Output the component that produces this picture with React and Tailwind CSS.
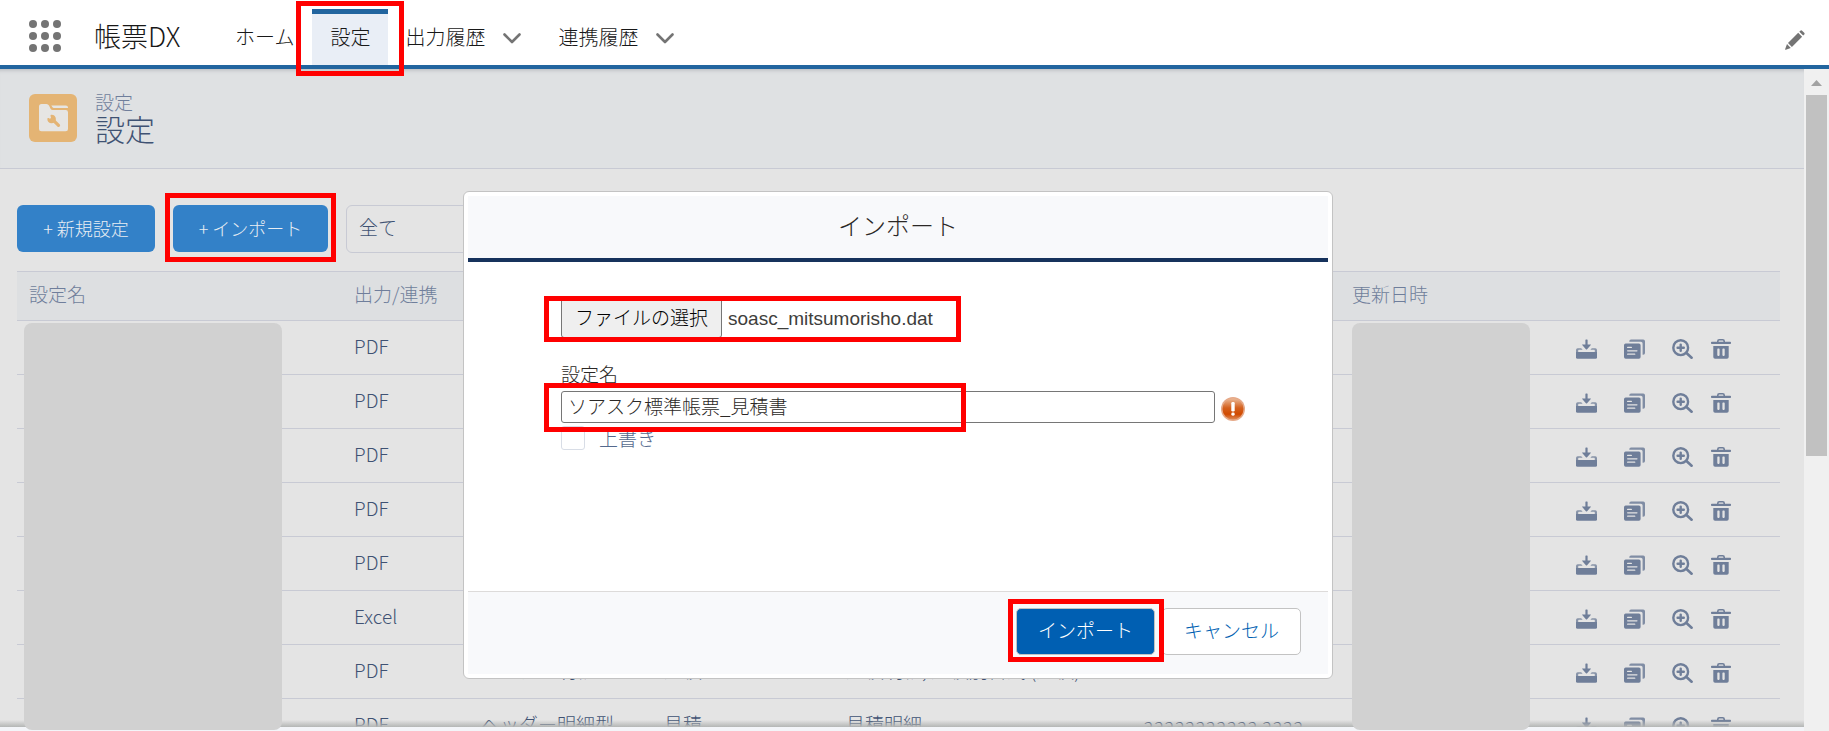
import React from "react";

const rows = [
  ["PDF", "ヘッダー明細型", "見積", "見積明細", ""],
  ["PDF", "ヘッダー明細型", "見積", "見積明細", ""],
  ["PDF", "ヘッダー明細型", "見積", "見積明細", ""],
  ["PDF", "ヘッダー明細型", "見積", "見積明細", ""],
  ["PDF", "ヘッダー明細型", "見積", "見積明細", ""],
  ["Excel", "ヘッダー明細型", "見積", "見積明細", ""],
  ["PDF", "ヘッダー明細型", "見積", "見積明細, 見積別書式 (見積)", ""],
  ["PDF", "ヘッダー明細型", "見積", "見積明細", "aaaaaaaaaaa aaaa"],
];

function Highlight({ className }) {
  return (
    <span
      aria-hidden="true"
      className={`pointer-events-none absolute z-30 border-[5px] border-[#ff0000] ${className}`}
    />
  );
}

function Chevron() {
  return (
    <svg viewBox="0 0 18 11" className="mt-1 h-[11px] w-[18px]" fill="none" stroke="#747474" strokeWidth="2.6" strokeLinecap="round" strokeLinejoin="round">
      <path d="M1.5 1.5 9 9l7.5-7.5" />
    </svg>
  );
}

function DownloadIcon() {
  return (
    <svg viewBox="0 0 21 20" className="h-5 w-[21px]" fill="currentColor">
      <path d="M9.400 1q0-.6.6-.6h1q.6 0 .6.600v4.400h2.900q.9 0 .3.700l-3.700 4.100q-.6.600-1.200 0L6.200 6.100q-.6-.7.3-.7h2.900Z" />
      <path d="M1.800 9.300h3.400l1.400 1.500H2.800q-.6 0-.6.600v2H0V11q0-1.700 1.800-1.700Z" opacity=".8" />
      <path d="M19.200 9.300h-3.400l-1.400 1.500h3.800q.6 0 .6.600v2H21V11q0-1.700-1.800-1.700Z" opacity=".8" />
      <path d="M0 12.900h21v5.300q0 1.500-1.500 1.500h-18Q0 19.700 0 18.200Z" />
    </svg>
  );
}

function CopyIcon() {
  return (
    <svg viewBox="0 0 21 20" className="h-5 w-[21px]" fill="currentColor">
      <path d="M5.300 2.200Q5.300.4 7 .4h12.200Q21 .4 21 2.200V14q0 1.800-1.800 1.800h-.6V4.400q0-1.700-1.700-1.700H5.300Z" opacity=".85" />
      <path fillRule="evenodd" d="M1.700 4.600h13.200q1.700 0 1.700 1.700V18q0 1.700-1.700 1.700H1.700Q0 19.700 0 18V6.300q0-1.700 1.700-1.700Zm2 3.200q-.7 0-.7.600t.7.600h3.600q.7 0 .7-.6t-.7-.6Zm0 3.400q-.7 0-.7.600t.7.600h9.200q.7 0 .7-.6t-.7-.6Zm0 3.400q-.7 0-.7.600t.7.600h7q.7 0 .7-.6t-.7-.6Z" />
    </svg>
  );
}

function ZoomIcon() {
  return (
    <svg viewBox="0 0 21 20" className="h-5 w-[21px]" fill="none" stroke="currentColor" strokeLinecap="round">
      <circle cx="8.700" cy="8.700" r="7.400" strokeWidth="2.400" />
      <path d="M8.700 5.600v6.200M5.600 8.700h6.200" strokeWidth="2.400" />
      <path d="m14.200 13.800 5.400 4.900" strokeWidth="2.600" />
    </svg>
  );
}

function TrashIcon() {
  return (
    <svg viewBox="0 0 20 20" className="size-5" fill="currentColor">
      <path d="M6.800 3V2.300Q6.800.8 8.300.8h3.400q1.500 0 1.500 1.500V3" fill="none" stroke="currentColor" strokeWidth="1.600" />
      <rect x="0" y="2.800" width="20" height="2.200" rx=".8" />
      <path fillRule="evenodd" d="M2.300 7h15.400v11q0 1.800-1.800 1.800H4.100Q2.300 19.800 2.300 18ZM7 9.600q-.7 0-.7.700v5.800q0 .8.7.8h.9q.7 0 .7-.8v-5.800q0-.7-.7-.7Zm5.100 0q-.7 0-.7.700v5.800q0 .8.7.8h.9q.7 0 .7-.8v-5.800q0-.7-.7-.7Z" />
    </svg>
  );
}

function PencilIcon() {
  return (
    <svg viewBox="0 0 20 20" className="size-5" fill="#747474">
      <path d="m14.300 1.700 1-1q.9-.8 1.800 0l2.100 2.100q.9.900 0 1.800l-1 1ZM13.200 2.800l3.900 3.900L6.900 16.900 3 13ZM2 14l3.800 3.900-5 1.800q-.8.200-.6-.6Z" />
    </svg>
  );
}

function FolderWrenchIcon() {
  return (
    <span className="flex size-12 items-center justify-center rounded-md bg-[#e4b474]">
      <svg viewBox="0 0 29 28" className="h-7 w-[29px]">
        <path d="M0 2.500Q0 0 2.500 0h5q1.600 0 2.500 1.500l1.700 3.400Q12.300 6 13.700 6h13Q29 6 29 8.300v16.600q0 2.400-2.400 2.400H2.400Q0 27.300 0 24.900Z" fill="#e6e5e3" />
        <path d="M12.300 1.400h14.500Q29 1.400 29 3.500v.4H15Q13.800 3.900 13.300 3Z" fill="#e6e5e3" />
        <path d="M12.400 11.600a3.400 3.400 0 1 1-3.200 3.200l2 1.200 1.800-1.800Z" fill="#e4b474" stroke="#e4b474" strokeWidth="1.800" strokeLinejoin="round" />
        <path d="m14.200 16.200 5.300 5.200" fill="none" stroke="#e4b474" strokeWidth="3.200" strokeLinecap="round" />
      </svg>
    </span>
  );
}

function RequiredIcon() {
  return (
    <svg viewBox="0 0 24 24" className="mt-[3px] size-6" role="img" aria-label="必須">
      <defs>
        <linearGradient id="warn" x1="0" y1="0" x2="0" y2="1">
          <stop offset="0" stopColor="#eab896" />
          <stop offset=".45" stopColor="#d4601d" />
          <stop offset=".75" stopColor="#d14a00" />
          <stop offset="1" stopColor="#dd8a58" />
        </linearGradient>
      </defs>
      <circle cx="12" cy="12" r="12" fill="#e6a988" />
      <circle cx="12" cy="12" r="10.500" fill="url(#warn)" />
      <rect x="10.300" y="5" width="3.400" height="9.500" rx="1.200" fill="#fff" />
      <rect x="10.300" y="15.500" width="3.400" height="3.200" rx="1.400" fill="#fff" />
    </svg>
  );
}

function GlobalHeader() {
  return (
    <header className="flex h-[69px] shrink-0 items-stretch border-b-4 border-[#22659f] bg-white text-xl leading-6 text-[#181818]">
      <button type="button" aria-label="アプリケーションランチャー" className="ml-[29px] grid grid-cols-3 gap-1 self-center pt-[7px]">
        {Array.from({ length: 9 }, (_, i) => (
          <span key={i} className="size-2 rounded-full bg-[#747474]" />
        ))}
      </button>
      <h1 className="ml-[33px] w-[123px] self-center pt-[6px] text-[27px] leading-8 font-light">帳票DX</h1>
      <nav className="flex items-stretch">
        <a href="#home" className="flex items-center px-[18px] pt-2">ホーム</a>
        <div className="relative flex items-stretch">
          <a href="#settings" className="mt-[9px] flex items-center border-t-[5px] border-[#22659f] bg-[#e9eef6] px-[18px] pb-[6px]">設定</a>
          <Highlight className="top-px -right-4 -left-4 h-[75px]" />
        </div>
        <a href="#output" className="flex items-center gap-[18px] pt-2 pr-5 pl-[17px]">出力履歴<Chevron /></a>
        <a href="#link" className="flex items-center gap-[18px] pt-2 pr-5 pl-[17px]">連携履歴<Chevron /></a>
      </nav>
      <button type="button" aria-label="編集" className="mr-6 ml-auto pt-[15px]">
        <PencilIcon />
      </button>
    </header>
  );
}

function SettingsTable() {
  return (
    <div className="relative mt-[18px]">
      <table className="w-full table-fixed border-collapse text-left text-[19px] leading-6 text-[#3f5273]">
        <colgroup>
          <col className="w-[325px]" />
          <col className="w-[127px]" />
          <col className="w-[183px]" />
          <col className="w-[182px]" />
          <col className="w-[297px]" />
          <col className="w-[209px]" />
          <col className="w-[224px]" />
          <col />
        </colgroup>
        <thead>
          <tr className="h-[49px] border-y border-[#c8cad4] bg-[#dddfe1] text-[#6f7e9b]">
            <th className="px-3 pb-1 font-light">設定名</th>
            <th className="px-3 pb-1 font-light whitespace-nowrap">出力/連携</th>
            <th className="px-3 pb-1 font-light">種別</th>
            <th className="px-3 pb-1 font-light">対象</th>
            <th className="px-3 pb-1 font-light">明細</th>
            <th className="px-3 pb-1 font-light">更新者</th>
            <th className="px-3 pb-1 font-light">更新日時</th>
            <td />
          </tr>
        </thead>
        <tbody>
          {rows.map((row, i) => (
            <tr key={i} className="h-[54px] border-b border-[#c8cad4]">
              <td />
              {row.map((cell, j) => (
                <td key={j} className="px-3 pb-1 font-light whitespace-nowrap">{cell}</td>
              ))}
              <td />
              <td className="px-3 pt-[2px]">
                <div className="flex items-center text-[#6f7e99]">
                  <button type="button" aria-label="ダウンロード" className="mr-[27px]"><DownloadIcon /></button>
                  <button type="button" aria-label="コピー" className="mr-[27px]"><CopyIcon /></button>
                  <button type="button" aria-label="プレビュー" className="mr-[18px]"><ZoomIcon /></button>
                  <button type="button" aria-label="削除"><TrashIcon /></button>
                </div>
              </td>
            </tr>
          ))}
        </tbody>
      </table>
      <div className="absolute top-[52px] left-[7px] z-10 h-[407px] w-[258px] rounded-lg bg-[#d1d1d1]" />
      <div className="absolute top-[52px] left-[1335px] z-10 h-[407px] w-[178px] rounded-lg bg-[#d1d1d1]" />
    </div>
  );
}

function ImportDialog() {
  return (
    <div role="dialog" aria-labelledby="dialog-title" className="w-[870px] rounded-md border border-[#c3c3c3] bg-white p-1 text-[19px] leading-6 font-light text-[#2b2826]">
      <div className="border-b-4 border-[#16325c] bg-[#f8f9fb] pt-[13px] pb-[17px]">
        <h2 id="dialog-title" className="text-center text-2xl leading-8 font-light">インポート</h2>
      </div>
      <div className="flex h-[329px] flex-col items-start px-[93px] pt-9">
        <div className="relative flex items-center">
          <label htmlFor="file" className="flex h-10 items-center rounded-[3px] border border-[#767676] bg-[#efefef] px-[13px] pb-[2px] text-black">
            ファイルの選択
          </label>
          <input id="file" type="file" className="sr-only" />
          <span className="ml-[6px] pt-[2px] font-['Liberation_Sans',sans-serif] font-normal text-[#3e3e3c]">soasc_mitsumorisho.dat</span>
          <Highlight className="top-[-2px] -left-[17px] h-[46px] w-[417px]" />
        </div>
        <label htmlFor="name" className="mt-6">設定名</label>
        <div className="relative mt-[5px] flex items-center gap-[6px]">
          <input
            id="name"
            type="text"
            defaultValue="ソアスク標準帳票_見積書"
            className="h-8 w-[654px] rounded-[3px] border border-[#767676] bg-white px-[6px] pb-1 outline-none"
          />
          <RequiredIcon />
          <Highlight className="-top-2 -left-[17px] h-[49px] w-[422px]" />
        </div>
        <label className="mt-[3px] flex items-center gap-[14px] text-[#54698d]">
          <input type="checkbox" className="size-6 appearance-none rounded-[3px] border border-[#d8dde6] bg-white" />
          上書き
        </label>
      </div>
      <div className="flex justify-end gap-[7px] border-t border-[#dddbda] bg-[#f8f9fb] px-[27px] pt-4 pb-[19px]">
        <div className="relative">
          <button type="button" className="h-[47px] w-[139px] rounded-[5px] border border-[#c3c3c3] bg-[#005fb2] pb-1 text-white">インポート</button>
          <Highlight className="-top-[9px] -left-2 h-[63px] w-[156px]" />
        </div>
        <button type="button" className="h-[47px] w-[139px] rounded-[5px] border border-[#c3c3c3] bg-white pb-1 text-[#005fb2]">キャンセル</button>
      </div>
    </div>
  );
}

export default function App() {
  return (
    <div className="flex h-screen flex-col overflow-hidden bg-[#e4e4e4] font-['Noto_Sans_CJK_JP','Noto_Sans',sans-serif] font-light">
      <GlobalHeader />
      <div className="flex min-h-0 flex-1">
        <main className="relative min-w-0 flex-1 overflow-hidden">
          <div className="flex h-[100px] items-center gap-[18px] border-b border-[#c8cad4] bg-[#dfe1e3] pb-[2px] pl-[29px] shadow-[inset_0_5px_4px_-4px_#b4b7bb]">
            <FolderWrenchIcon />
            <div className="font-light">
              <p className="text-[19px] leading-5 text-[#6f7e9b]">設定</p>
              <h2 className="text-3xl leading-8 font-light text-[#3f5273]">設定</h2>
            </div>
          </div>
          <div className="pt-9 pr-6 pl-[17px]">
            <div className="flex items-stretch text-[18px] leading-6">
              <button type="button" className="h-[47px] w-[138px] rounded-md bg-[#3381c8] pb-[2px] text-[#e8edf3]">+ 新規設定</button>
              <div className="relative ml-[18px]">
                <button type="button" className="h-[47px] w-[155px] rounded-md bg-[#3381c8] pb-[2px] text-[#e8edf3]">+ インポート</button>
                <Highlight className="-top-3 -left-2 h-[69px] w-[171px]" />
              </div>
              <select aria-label="絞り込み" className="ml-[18px] h-12 w-[260px] appearance-none rounded-md border border-[#c8cad4] bg-transparent px-3 pb-1 text-[19px] text-[#3f5273]">
                <option>全て</option>
              </select>
            </div>
            <SettingsTable />
          </div>
          <div className="absolute inset-x-0 bottom-0 z-[5] h-[11px] border-b-4 border-[#f3f5f9] bg-linear-to-b from-transparent to-[#b4b6b5]" />
          <div className="absolute inset-0 z-20 flex items-start justify-center pt-[122px] pr-2">
            <ImportDialog />
          </div>
        </main>
        <div className="flex w-[25px] flex-col items-center bg-[#f0f0f0]">
          <svg viewBox="0 0 11 6" className="mt-[11px] h-[6px] w-[11px]">
            <path d="M0 6 5.500 0 11 6Z" fill="#a2a2a2" />
          </svg>
          <div className="mt-[9px] h-[361px] w-[21px] bg-[#c1c1c1]" />
        </div>
      </div>
    </div>
  );
}
